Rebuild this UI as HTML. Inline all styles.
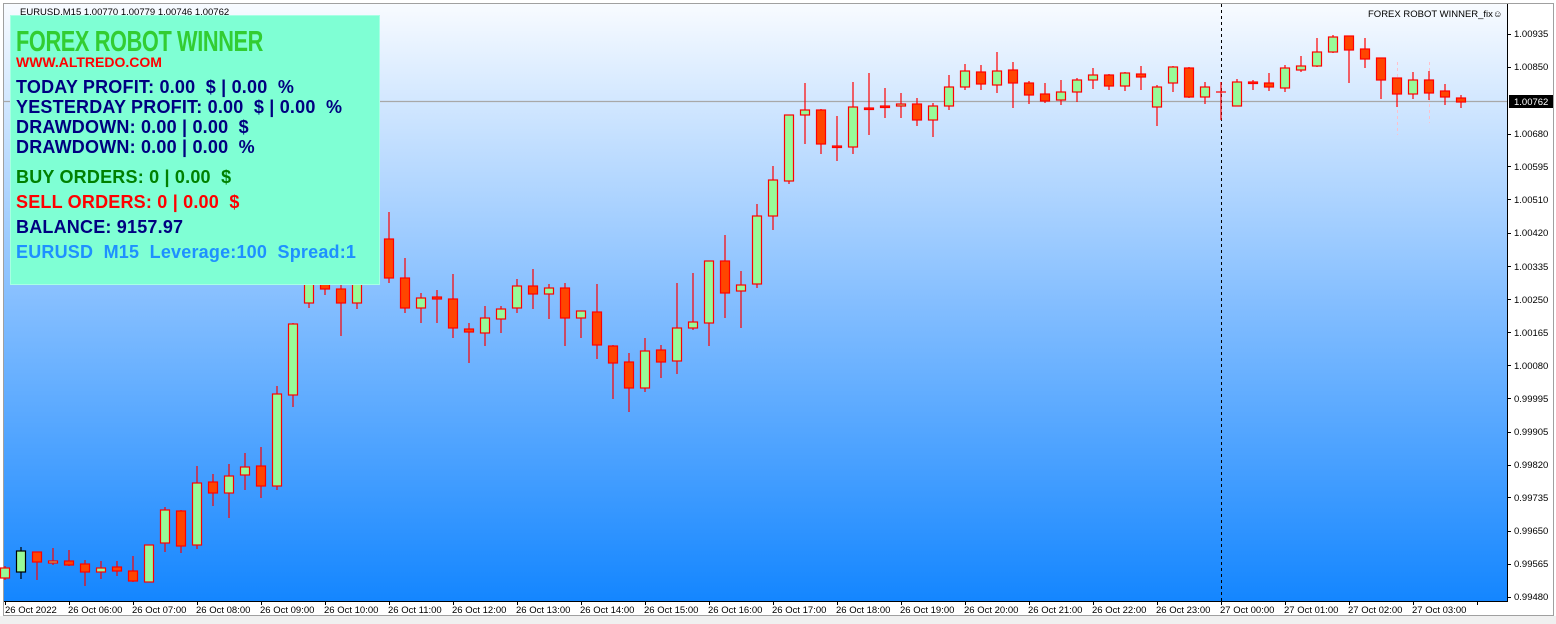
<!DOCTYPE html>
<html><head><meta charset="utf-8"><style>
html,body{margin:0;padding:0;width:1556px;height:624px;overflow:hidden;background:#f0f0f0;font-family:"Liberation Sans",Arial,sans-serif}
#wrap{position:absolute;left:0;top:0;width:1556px;height:624px}
#panel{position:absolute;left:10px;top:15px;width:370px;height:270px;background:#7fffd4;border:1px solid #a8ffe4;box-sizing:border-box}
#panel div{position:absolute;left:5px;white-space:pre;font-weight:bold}
.n{color:#000080;font-size:18px;letter-spacing:0.2px}
</style></head><body><div id="wrap">
<svg width="1556" height="624" viewBox="0 0 1556 624" xmlns="http://www.w3.org/2000/svg" style="position:absolute;left:0;top:0">
<defs><linearGradient id="bg" x1="0" y1="0" x2="0" y2="1">
<stop offset="0" stop-color="#f8fbff"/><stop offset="0.5" stop-color="#84beff"/><stop offset="1" stop-color="#1486ff"/></linearGradient></defs>
<rect x="0" y="0" width="1556" height="624" fill="#f0f0f0"/>
<rect x="0" y="0" width="1556" height="616" fill="#fff"/>
<rect x="4" y="4" width="1503" height="597" fill="url(#bg)"/>
<rect x="3.5" y="3.5" width="1550" height="612" fill="none" stroke="#a0a0a0"/>
<line x1="4" y1="101.5" x2="1507" y2="101.5" stroke="#a8a8a8" stroke-width="1.3"/>
<line x1="1221.5" y1="4" x2="1221.5" y2="601" stroke="#000" stroke-dasharray="3,3"/>
<line x1="1397.5" y1="62" x2="1397.5" y2="135" stroke="#ffc0cb" stroke-dasharray="3,3"/>
<line x1="1429.5" y1="62" x2="1429.5" y2="123" stroke="#ffc0cb" stroke-dasharray="3,3"/>
<g id="c"></g>
<line x1="1507.5" y1="4" x2="1507.5" y2="602" stroke="#000"/>
<line x1="4" y1="601.5" x2="1508" y2="601.5" stroke="#000"/>
<g id="t" stroke="#000"></g>
<rect x="1509" y="95" width="44" height="13" fill="#000"/>
<g font-family="Liberation Sans, Arial, sans-serif" font-size="9.5" fill="#000">
<text x="20" y="15">EURUSD,M15  1.00770 1.00779 1.00746 1.00762</text>
<text x="1368" y="17">FOREX ROBOT WINNER_fix☺</text>
<text x="1514" y="37">1.00935</text><text x="1514" y="70">1.00850</text>
<text x="1514" y="105" fill="#fff">1.00762</text>
<text x="1514" y="137">1.00680</text><text x="1514" y="170">1.00595</text>
<text x="1514" y="203">1.00510</text><text x="1514" y="236">1.00420</text>
<text x="1514" y="270">1.00335</text><text x="1514" y="303">1.00250</text>
<text x="1514" y="336">1.00165</text><text x="1514" y="369">1.00080</text>
<text x="1514" y="402">0.99995</text><text x="1514" y="435">0.99905</text>
<text x="1514" y="468">0.99820</text><text x="1514" y="501">0.99735</text>
<text x="1514" y="534">0.99650</text><text x="1514" y="567">0.99565</text>
<text x="1514" y="600">0.99480</text>
<g font-size="9.5">
<text x="5" y="613">26 Oct 2022</text><text x="68" y="613">26 Oct 06:00</text>
<text x="132" y="613">26 Oct 07:00</text><text x="196" y="613">26 Oct 08:00</text>
<text x="260" y="613">26 Oct 09:00</text><text x="324" y="613">26 Oct 10:00</text>
<text x="388" y="613">26 Oct 11:00</text><text x="452" y="613">26 Oct 12:00</text>
<text x="516" y="613">26 Oct 13:00</text><text x="580" y="613">26 Oct 14:00</text>
<text x="644" y="613">26 Oct 15:00</text><text x="708" y="613">26 Oct 16:00</text>
<text x="772" y="613">26 Oct 17:00</text><text x="836" y="613">26 Oct 18:00</text>
<text x="900" y="613">26 Oct 19:00</text><text x="964" y="613">26 Oct 20:00</text>
<text x="1028" y="613">26 Oct 21:00</text><text x="1092" y="613">26 Oct 22:00</text>
<text x="1156" y="613">26 Oct 23:00</text><text x="1220" y="613">27 Oct 00:00</text>
<text x="1284" y="613">27 Oct 01:00</text><text x="1348" y="613">27 Oct 02:00</text>
<text x="1412" y="613">27 Oct 03:00</text>
</g></g>
</svg>
<div id="panel">
<div style="top:10px;left:5px;color:#32cd32;font-size:29px;line-height:32px;transform:scaleX(0.75);transform-origin:0 0;letter-spacing:-0.5px">FOREX ROBOT WINNER</div>
<div style="top:38px;color:#ff0000;font-size:14px">WWW.ALTREDO.COM</div>
<div class="n" style="top:61px">TODAY PROFIT: 0.00  $ | 0.00  %</div>
<div class="n" style="top:81px">YESTERDAY PROFIT: 0.00  $ | 0.00  %</div>
<div class="n" style="top:101px">DRAWDOWN: 0.00 | 0.00  $</div>
<div class="n" style="top:121px">DRAWDOWN: 0.00 | 0.00  %</div>
<div class="n" style="top:151px;color:#008000">BUY ORDERS: 0 | 0.00  $</div>
<div class="n" style="top:176px;color:#ff0000">SELL ORDERS: 0 | 0.00  $</div>
<div class="n" style="top:201px">BALANCE: 9157.97</div>
<div class="n" style="top:226px;color:#1e90ff">EURUSD  M15  Leverage:100  Spread:1</div>
</div>
</div>
<script>
var d=[[0,566,568,578,580,'g'],[1,547,551,572,579,'g'],[2,552,552,562,580,'r'],[3,548,561,563,565,'g'],[4,550,561,565,566,'r'],[5,560,564,572,586,'r'],[6,561,568,572,579,'g'],[7,561,567,571,576,'r'],[8,556,571,581,582,'r'],[9,545,545,582,582,'g'],[10,507,510,543,552,'g'],[11,510,511,546,553,'r'],[12,466,483,545,549,'g'],[13,474,482,493,506,'r'],[14,464,476,493,518,'g'],[15,453,467,475,490,'g'],[16,447,466,486,498,'r'],[17,386,394,486,490,'g'],[18,323,324,395,407,'g'],[19,270,275,303,308,'g'],[20,270,284,289,295,'r'],[21,280,289,303,336,'r'],[22,270,275,303,309,'g'],[24,212,239,278,283,'r'],[25,258,278,308,313,'r'],[26,293,298,308,323,'g'],[27,290,297,299,323,'r'],[28,274,299,328,338,'r'],[29,323,329,332,363,'r'],[30,306,318,333,346,'g'],[31,306,309,319,333,'g'],[32,279,286,308,313,'g'],[33,269,286,294,309,'r'],[34,284,288,294,319,'g'],[35,283,288,318,346,'r'],[36,311,311,318,338,'g'],[37,284,312,345,359,'r'],[38,345,346,363,399,'r'],[39,353,362,388,412,'r'],[40,338,351,388,392,'g'],[41,345,350,362,378,'r'],[42,283,328,361,374,'g'],[43,273,322,328,330,'g'],[44,262,261,323,346,'g'],[45,235,261,293,318,'r'],[46,271,285,291,328,'g'],[47,204,216,284,288,'g'],[48,166,180,216,230,'g'],[49,115,115,181,184,'g'],[50,83,110,115,144,'g'],[51,109,110,144,154,'r'],[52,116,146,147,161,'r'],[53,82,107,147,154,'g'],[54,73,108,109,135,'r'],[55,88,106,107,118,'r'],[56,93,104,106,118,'g'],[57,98,104,120,126,'r'],[58,103,106,120,137,'g'],[59,75,87,106,110,'g'],[60,64,71,87,90,'g'],[61,65,72,84,90,'r'],[62,52,71,85,93,'g'],[63,62,70,83,108,'r'],[64,81,83,95,104,'r'],[65,83,94,101,103,'r'],[66,80,92,100,105,'g'],[67,78,80,92,102,'g'],[68,68,75,80,89,'g'],[69,74,75,86,90,'r'],[70,72,73,86,91,'g'],[71,66,74,77,90,'r'],[72,85,87,107,126,'g'],[73,66,67,83,92,'g'],[74,67,68,97,98,'r'],[75,82,87,97,104,'g'],[76,82,92,92,120,'x'],[77,79,82,106,106,'g'],[78,80,82,83,90,'r'],[79,73,83,87,91,'r'],[80,65,68,88,92,'g'],[81,56,66,70,72,'g'],[82,38,52,66,67,'g'],[83,35,37,52,53,'g'],[84,36,36,50,83,'r'],[85,38,49,59,68,'r'],[86,58,58,80,99,'r'],[87,78,78,94,107,'r'],[88,72,80,94,99,'g'],[89,71,80,93,100,'r'],[90,84,91,97,105,'r'],[91,95,98,102,108,'r']];
var s='';d.forEach(function(a){var x=5+16*a[0];var st=a[0]==1?'#000':'#ff0000';
s+='<line x1="'+x+'" y1="'+a[1]+'" x2="'+x+'" y2="'+a[4]+'" stroke="'+st+'" stroke-width="1.2"/>';
if(a[5]=='x'){s+='<line x1="'+(x-5)+'" y1="'+a[2]+'" x2="'+(x+5)+'" y2="'+a[2]+'" stroke="#f00" stroke-width="1.2"/>';}
else{var h=Math.max(a[3]-a[2],1.5);s+='<rect x="'+(x-4.5)+'" y="'+a[2]+'" width="9" height="'+h+'" fill="'+(a[5]=='g'?'#98fb98':'#ff4500')+'" stroke="'+st+'" stroke-width="1.2"/>';}});
document.getElementById('c').innerHTML=s;
var t='';for(var i=0;i<24;i++){var x=5.5+64*i;t+='<line x1="'+x+'" y1="601" x2="'+x+'" y2="605"/>';}
[34,67,134,166,199,233,266,299,332,365,398,432,465,497,531,564,597].forEach(function(y){t+='<line x1="1507" y1="'+(y+.5)+'" x2="1511" y2="'+(y+.5)+'"/>';});
document.getElementById('t').innerHTML=t;
</script>
</body></html>
